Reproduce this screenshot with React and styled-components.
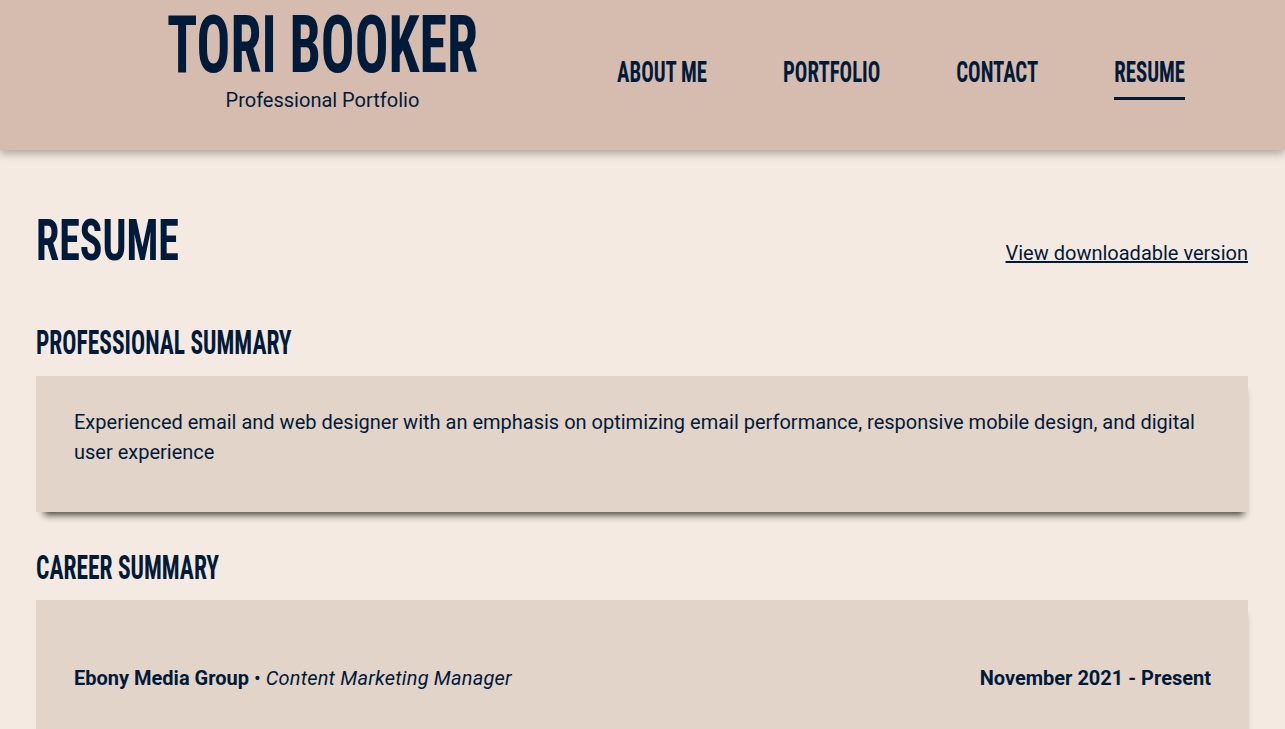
import React from 'react'
import styled, { createGlobalStyle, css } from 'styled-components'

const navy = '#001a3a'

const GlobalStyle = createGlobalStyle`
  html, body {
    margin: 0;
    padding: 0;
    background-color: #f5eae1;
    font-family: Roboto, "Liberation Sans", sans-serif;
    color: ${navy};
  }
`

// condensed display face, stretched vertically to get the tall caps
const display = css`
  font-family: "Roboto Condensed", "DejaVu Sans Condensed", sans-serif;
  font-weight: 700;
  text-transform: uppercase;
  white-space: nowrap;
  line-height: 1;
  transform: scaleY(1.45);
  transform-origin: center;
  color: ${navy};
`

const Header = styled.header`
  background-color: #d6bcaf;
  height: 150px;
  box-sizing: border-box;
  display: flex;
  align-items: flex-start;
  padding: 17px 100px 0 167px;
  box-shadow: 0 4px 8px rgba(0, 0, 0, 0.28);
  position: relative;
  z-index: 1;
`

const Brand = styled.div`
  flex-shrink: 0;
  display: flex;
  flex-direction: column;
  align-items: center;
`

const BrandName = styled.h1`
  ${display};
  font-size: 56px;
  margin: 0 0 15px;
  transform: scaleY(1.42);
`

const Tagline = styled.div`
  font-size: 20px;
  line-height: 24px;
`

const Nav = styled.nav`
  margin-left: auto;
  margin-top: 45px;
  display: flex;
  gap: 76px;
`

const NavLink = styled.a`
  display: block;
  text-decoration: none;
  padding-bottom: 14px;
  border-bottom: 3px solid ${({ $active }) => ($active ? navy : 'transparent')};
`

const NavLabel = styled.span`
  ${display};
  display: block;
  font-size: 20.8px;
`

const Main = styled.main`
  padding: 70px 37px 0 36px;
`

const TitleRow = styled.div`
  display: flex;
  justify-content: space-between;
  align-items: flex-end;
`

const PageTitle = styled.h2`
  ${display};
  font-size: 42px;
  margin: 0;
  transform: scaleY(1.38);
  transform-origin: left center;
`

const DownloadLink = styled.a`
  font-size: 20px;
  line-height: 18px;
  color: ${navy};
  text-decoration: underline;
`

const Section = styled.section`
  margin-top: ${({ $top }) => $top}px;
`

const SectionTitle = styled.h3`
  ${display};
  font-size: 23.5px;
  margin: 0 0 20px;
  transform: scaleY(1.4);
  transform-origin: left center;
`

const Card = styled.div`
  background-color: #e2d4c9;
  padding: ${({ $pad }) => $pad};
  box-shadow: 2px 9px 7px -6px rgba(40, 36, 32, 0.85);
`

const Summary = styled.p`
  margin: 0;
  font-size: 20px;
  line-height: 30px;
`

const JobRow = styled.div`
  display: flex;
  justify-content: space-between;
  align-items: center;
  font-size: 20px;
  line-height: 30px;
`

const Company = styled.span`
  font-weight: 700;
`

const Role = styled.span`
  font-style: italic;
  letter-spacing: 0.2px;
`

const Dates = styled.span`
  font-weight: 700;
`

const links = ['About Me', 'Portfolio', 'Contact', 'Resume']

export default function App() {
  return (
    <>
      <GlobalStyle />
      <Header>
        <Brand>
          <BrandName>Tori Booker</BrandName>
          <Tagline>Professional Portfolio</Tagline>
        </Brand>
        <Nav>
          {links.map((label) => (
            <NavLink key={label} href="#" $active={label === 'Resume'}>
              <NavLabel>{label}</NavLabel>
            </NavLink>
          ))}
        </Nav>
      </Header>
      <Main>
        <TitleRow>
          <PageTitle>Resume</PageTitle>
          <DownloadLink href="#">View downloadable version</DownloadLink>
        </TitleRow>
        <Section $top={70}>
          <SectionTitle>Professional Summary</SectionTitle>
          <Card $pad="31px 38px 45px 38px">
            <Summary>
              Experienced email and web designer with an emphasis on optimizing email performance,
              responsive mobile design, and digital user experience
            </Summary>
          </Card>
        </Section>
        <Section $top={45}>
          <SectionTitle>Career Summary</SectionTitle>
          <Card $pad="63px 37px 60px 38px">
            <JobRow>
              <span>
                <Company>Ebony Media Group</Company> • <Role>Content Marketing Manager</Role>
              </span>
              <Dates>November 2021 - Present</Dates>
            </JobRow>
          </Card>
        </Section>
      </Main>
    </>
  )
}
